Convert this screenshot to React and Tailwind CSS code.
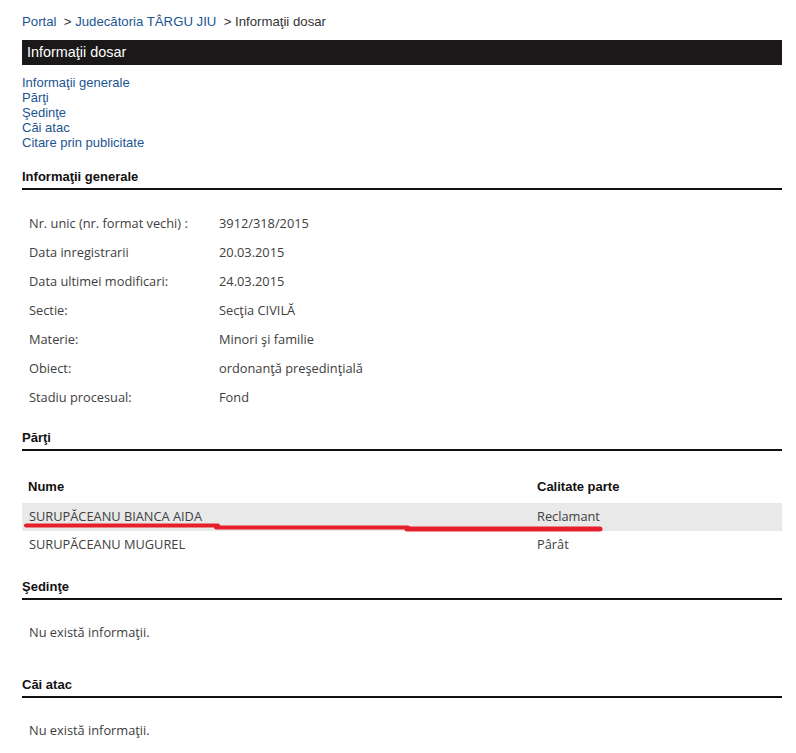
import React from "react";

const arial = { fontFamily: '"Liberation Sans", Arial, sans-serif' };
const open = { fontFamily: '"Open Sans", "DejaVu Sans", sans-serif' };

function Heading({ children, className = "" }) {
  return (
    <div
      className={`text-[13px] font-bold leading-[16px] pt-[1px] pb-[3px] border-b-2 border-[#111] text-[#111] ${className}`}
      style={arial}
    >
      {children}
    </div>
  );
}

const info = [
  ["Nr. unic (nr. format vechi) :", "3912/318/2015"],
  ["Data inregistrarii", "20.03.2015"],
  ["Data ultimei modificari:", "24.03.2015"],
  ["Sectie:", "Secţia CIVILĂ"],
  ["Materie:", "Minori şi familie"],
  ["Obiect:", "ordonanţă preşedinţială"],
  ["Stadiu procesual:", "Fond"],
];

export default function App() {
  return (
    <div className="relative w-[796px] min-h-[753px] bg-white">
      <div className="pl-[22px] w-[782px] pt-[14px]">
        <div className="text-[13.2px] leading-[16px] text-[#333]" style={arial}>
          <span className="text-[#1c5592]">Portal</span>
          <span>&nbsp; &gt; </span>
          <span className="text-[#1c5592]">Judecătoria TÂRGU JIU</span>
          <span>&nbsp; &gt; Informaţii dosar</span>
        </div>

        <div
          className="mt-[10px] h-[25px] bg-[#1a1818] text-white text-[14.4px] leading-[25px] pl-[5px]"
          style={arial}
        >
          Informaţii dosar
        </div>

        <div className="mt-[10px] flex flex-col text-[13px] leading-[15px] text-[#1c5592]" style={arial}>
          <span>Informaţii generale</span>
          <span>Părţi</span>
          <span>Şedinţe</span>
          <span>Căi atac</span>
          <span>Citare prin publicitate</span>
        </div>

        <Heading className="mt-[18px]">Informaţii generale</Heading>

        <div className="mt-[19px] flex flex-col text-[12.8px] text-[#404040]" style={open}>
          {info.map(([k, v]) => (
            <div key={k} className="flex h-[29px] items-center pl-[7px]">
              <span className="w-[190px] shrink-0">{k}</span>
              <span>{v}</span>
            </div>
          ))}
        </div>

        <Heading className="mt-[17px]">Părţi</Heading>

        <div className="mt-[22px]">
          <div className="flex h-[30px] pt-[6px] text-[13px] font-bold leading-[16px] text-[#111]" style={arial}>
            <span className="w-[515px] pl-[6px] shrink-0">Nume</span>
            <span>Calitate parte</span>
          </div>
          <div className="flex h-[28px] items-center bg-[#e9e9e9] text-[12.8px] text-[#404040]" style={open}>
            <span className="w-[515px] pl-[7px] shrink-0">SURUPĂCEANU BIANCA AIDA</span>
            <span>Reclamant</span>
          </div>
          <div className="flex h-[28px] items-center text-[12.8px] text-[#404040]" style={open}>
            <span className="w-[515px] pl-[7px] shrink-0">SURUPĂCEANU MUGUREL</span>
            <span>Pârât</span>
          </div>
        </div>

        <Heading className="mt-[19px]">Şedinţe</Heading>
        <div className="mt-[18px] h-[29px] flex items-center pl-[7px] text-[12.8px] text-[#404040]" style={open}>
          Nu există informaţii.
        </div>

        <Heading className="mt-[29px]">Căi atac</Heading>
        <div className="mt-[18px] h-[29px] flex items-center pl-[7px] text-[12.8px] text-[#404040]" style={open}>
          Nu există informaţii.
        </div>
      </div>

      <svg
        className="absolute left-0 top-0 pointer-events-none"
        width="796"
        height="753"
        viewBox="0 0 796 753"
      >
        <g stroke="#e5202a" strokeLinecap="round" fill="none">
          <path d="M26 525.5 L218 525.5" strokeWidth="4" />
          <path d="M216 527.5 L408 527.5" strokeWidth="4" />
          <path d="M407 529 L600 529" strokeWidth="5" />
        </g>
      </svg>
    </div>
  );
}
